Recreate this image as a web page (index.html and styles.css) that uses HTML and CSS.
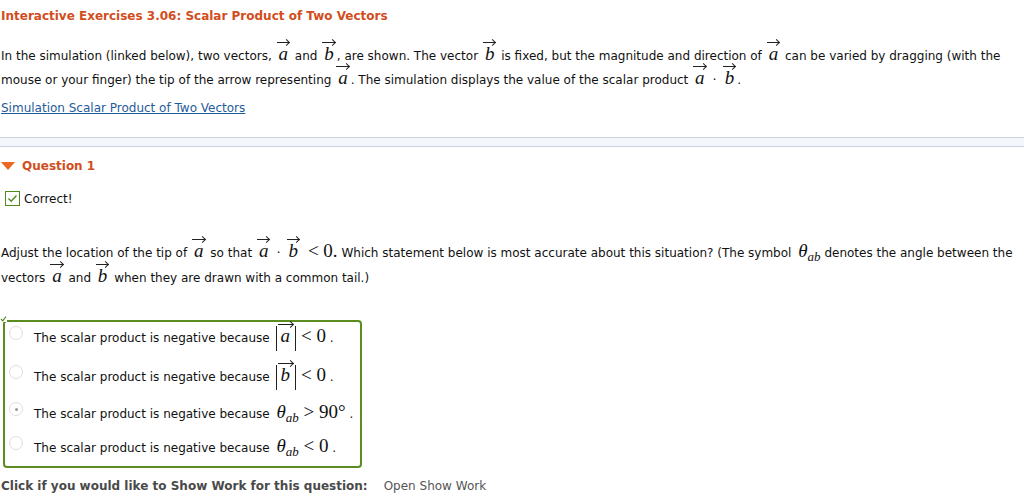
FILE: index.html
```html
<!DOCTYPE html>
<html>
<head>
  <meta charset="UTF-8">
  <title>Interactive Exercises 3.06</title>
  <link rel="stylesheet" href="styles.css">
</head>
<body>
  <h1 class="title">Interactive Exercises 3.06: Scalar Product of Two Vectors</h1>

  <p class="intro">
    In the simulation (linked below), two vectors, <span class="vec">a</span> and <span class="vec">b</span>, are shown.
    The vector <span class="vec">b</span> is fixed, but the magnitude and direction of <span class="vec">a</span> can be
    varied by dragging (with the mouse or your finger) the tip of the arrow representing <span class="vec">a</span>.
    The simulation displays the value of the scalar product <span class="vec">a</span><span class="dot">&middot;</span><span class="vec">b</span>.
  </p>
  <a class="sim_link" href="#">Simulation Scalar Product of Two Vectors</a>

  <div class="divider"></div>

  <div class="question">
    <div class="question_head">
      <span class="toggle"></span>
      <span class="question_title">Question 1</span>
    </div>
    <div class="feedback">
      <span class="check_box">
        <svg width="11" height="9" viewBox="0 0 11 9"><path d="M1.5 4.5 L4.2 7.2 L9.5 1.5" fill="none" stroke="#4f8a1a" stroke-width="1.4"/></svg>
      </span>
      <span>Correct!</span>
    </div>

    <p class="prompt">
      Adjust the location of the tip of <span class="vec">a</span> so that <span class="vec">a</span><span class="dot">&middot;</span><span class="vec">b</span>
      <span class="math">&lt; 0.</span> Which statement below is most accurate about this situation? (The symbol
      <span class="math"><i>&theta;</i><sub><i>ab</i></sub></span> denotes the angle between the vectors <span class="vec">a</span>
      and <span class="vec">b</span> when they are drawn with a common tail.)
    </p>

    <div class="answers">
      <span class="corner_tick">
        <svg width="7" height="7" viewBox="0 0 7 7"><path d="M1 4 L2.8 5.8 L6 1.5" fill="none" stroke="#4f8a1a" stroke-width="1.2"/></svg>
      </span>
      <label class="choice tall">
        <span class="radio"></span>
        <span class="choice_text">The scalar product is negative because <span class="abs"><span class="vec">a</span></span><span class="math">&lt; 0</span> .</span>
      </label>
      <label class="choice tall">
        <span class="radio"></span>
        <span class="choice_text">The scalar product is negative because <span class="abs"><span class="vec">b</span></span><span class="math">&lt; 0</span> .</span>
      </label>
      <label class="choice">
        <span class="radio selected"></span>
        <span class="choice_text">The scalar product is negative because <span class="math"><i>&theta;</i><sub><i>ab</i></sub> &gt; 90&deg;</span> .</span>
      </label>
      <label class="choice">
        <span class="radio"></span>
        <span class="choice_text">The scalar product is negative because <span class="math"><i>&theta;</i><sub><i>ab</i></sub> &lt; 0</span> .</span>
      </label>
    </div>

    <div class="show_work">
      <span class="show_work_label">Click if you would like to Show Work for this question:</span>
      <a class="show_work_link" href="#">Open Show Work</a>
    </div>
  </div>
</body>
</html>
```

FILE: styles.css
```css
body {
  margin: 0;
  padding: 0 1px;
  font-family: Verdana, "DejaVu Sans", sans-serif;
  font-size: 12px;
  color: #111;
  background: #fff;
}
.title {
  margin: 9px 0 0;
  font-size: 12px;
  font-weight: bold;
  color: #d24d1c;
}
.intro {
  margin: 21px 0 0;
  line-height: 24px;
}
.sim_link {
  display: inline-block;
  margin-top: 9px;
  color: #1f5b9a;
  text-decoration: underline;
}
.divider {
  margin: 22px -1px 0;
  height: 8px;
  background: #f3f7fb;
  border-top: 1px solid #c9d3df;
  border-bottom: 1px solid #c9d3df;
}
.question_head {
  display: flex;
  align-items: center;
  gap: 7px;
  margin-top: 12px;
}
.toggle {
  width: 0;
  height: 0;
  border-left: 7px solid transparent;
  border-right: 7px solid transparent;
  border-top: 8px solid #e8691f;
}
.question_title {
  font-weight: bold;
  color: #d24d1c;
}
.feedback {
  display: flex;
  align-items: center;
  gap: 4px;
  margin: 18px 0 0 4px;
}
.check_box {
  display: flex;
  align-items: center;
  justify-content: center;
  width: 13px;
  height: 13px;
  border: 1px solid #4f8a1a;
}
.prompt {
  margin: 34px 0 0;
  line-height: 25px;
}

/* vector symbol: italic letter with an arrow drawn above it */
.vec {
  position: relative;
  display: inline-block;
  font-family: "Liberation Serif", "Times New Roman", serif;
  font-style: italic;
  font-size: 19px;
  line-height: 16px;
  padding: 0 3px;
}
.vec::before {
  content: "";
  position: absolute;
  left: 1px;
  right: 2px;
  top: -4px;
  height: 1px;
  background: #222;
}
.vec::after {
  content: "";
  position: absolute;
  right: 2px;
  top: -6px;
  width: 5px;
  height: 5px;
  border-top: 1px solid #222;
  border-right: 1px solid #222;
  transform: rotate(45deg);
  box-sizing: border-box;
}
.dot {
  padding: 0 5px;
  font-size: 13px;
}
.math {
  font-family: "Liberation Serif", "Times New Roman", serif;
  font-size: 19px;
  padding-left: 3px;
  line-height: 16px;
}
.math sub {
  font-size: 13px;
  line-height: 0;
  vertical-align: -4px;
}
.abs {
  display: inline-block;
  border-left: 1px solid #222;
  border-right: 1px solid #222;
  margin: 0 2px 0 3px;
  padding: 2px 0 5px;
  line-height: 16px;
}
.abs .vec {
  padding: 0 5px 0 3px;
}
.answers {
  position: relative;
  margin: 29px 0 0 2px;
  width: 355px;
  padding: 2px 0 6px;
  border: 2px solid #5b8c1f;
  border-radius: 4px;
}
.corner_tick {
  position: absolute;
  left: -5px;
  top: -7px;
  display: flex;
  width: 7px;
  height: 7px;
  background: #fff;
}
.choice {
  display: flex;
  align-items: flex-start;
  gap: 11px;
  padding-left: 4px;
}
.choice.tall {
  padding-top: 2px;
  padding-bottom: 2px;
}
.choice + .choice {
  margin-top: 10px;
}
.radio {
  flex: none;
  width: 14px;
  height: 14px;
  box-sizing: border-box;
  border: 1px solid #dedede;
  border-radius: 50%;
  background: #fff;
  position: relative;
}
.radio.selected::after {
  content: "";
  position: absolute;
  left: 5px;
  top: 5px;
  width: 3px;
  height: 3px;
  border-radius: 50%;
  background: #999;
}
.choice_text {
  line-height: 24px;
}
.show_work {
  margin-top: 11px;
  display: flex;
  gap: 16px;
  color: #555;
}
.show_work_label {
  font-weight: bold;
  color: #4a4a4a;
}
.show_work_link {
  color: #555;
  text-decoration: none;
}
```
